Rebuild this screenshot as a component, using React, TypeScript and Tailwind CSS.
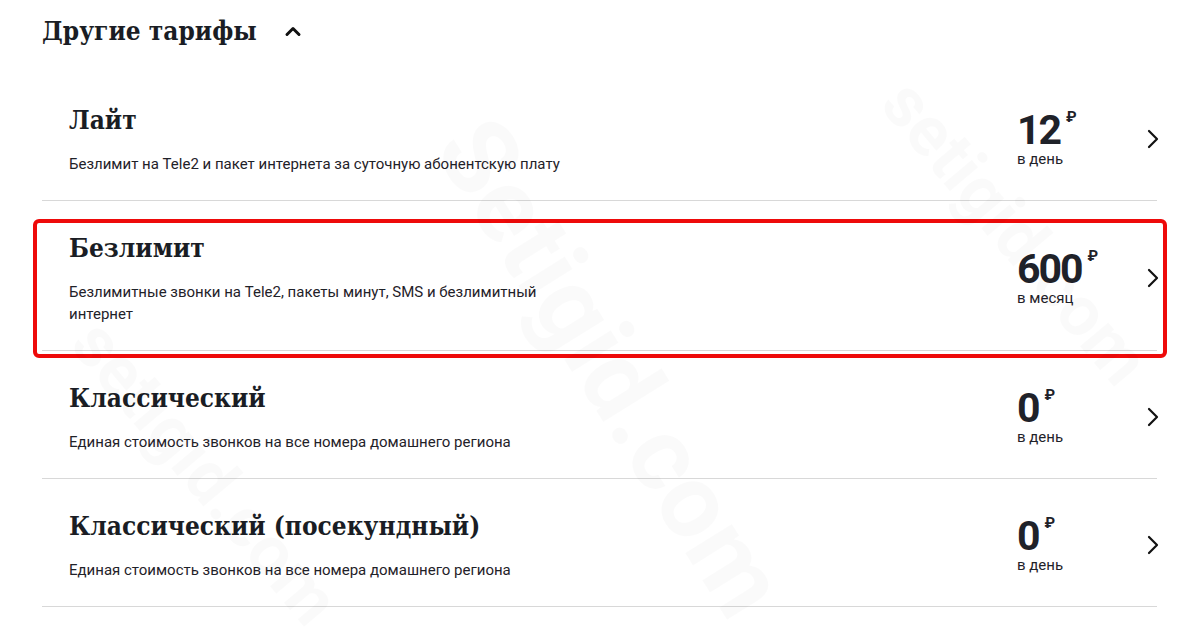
import React from 'react'

type Tariff = {
  title: string
  desc: string
  price: string
  period: string
  marked?: boolean
}

const tariffs: Tariff[] = [
  { title: 'Лайт', desc: 'Безлимит на Tele2 и пакет интернета за суточную абонентскую плату', price: '12', period: 'в день' },
  { title: 'Безлимит', desc: 'Безлимитные звонки на Tele2, пакеты минут, SMS и безлимитный интернет', price: '600', period: 'в месяц', marked: true },
  { title: 'Классический', desc: 'Единая стоимость звонков на все номера домашнего региона', price: '0', period: 'в день' },
  { title: 'Классический (посекундный)', desc: 'Единая стоимость звонков на все номера домашнего региона', price: '0', period: 'в день' },
]

const serif = { fontFamily: '"DejaVu Serif", serif' }

function ChevronRight() {
  return (
    <svg width="12" height="20" viewBox="0 0 12 20" fill="none">
      <path d="M2 2l8 8-8 8" stroke="#111" strokeWidth="2.2" strokeLinecap="round" strokeLinejoin="round" />
    </svg>
  )
}

function Row({ t }: { t: Tariff }) {
  return (
    <div className="relative flex items-center border-b border-[#d8d8d8] pl-[27px] pt-[30px] pb-[25px]">
      <div className="flex-1">
        <h3
          className="text-[26px] leading-[34px] font-bold text-[#1a1d24] font-stretch-condensed"
          style={serif}
        >
          {t.title}
        </h3>
        <p className="mt-[16px] max-w-[500px] text-[15px] leading-[22px] text-[#1f2229]">{t.desc}</p>
      </div>
      <div className="w-[130px] text-[#1f2229]">
        <div className="flex items-start h-[39px]">
          <span className="block text-[41px] leading-[39px] font-bold tracking-[-2px]">{t.price}</span>
          <span className="block ml-[6px] mt-[-1px] text-[15px] leading-[15px] font-bold">₽</span>
        </div>
        <div className="text-[15px] leading-[18px]">{t.period}</div>
      </div>
      <div className="w-[12px] mr-[-2px] flex items-center">
        <ChevronRight />
      </div>
      {t.marked && (
        <div className="pointer-events-none absolute top-[18px] bottom-[-8px] left-[-9px] right-[-10px] rounded-[6px] border-[4px] border-[#ee0a0a]" />
      )}
    </div>
  )
}

export default function App() {
  return (
    <div
      className="relative w-[1199px] h-[627px] overflow-hidden bg-white"
      style={{ fontFamily: 'Roboto, "Open Sans", sans-serif' }}
    >
      <div className="px-[42px]">
        <div className="flex items-center h-[64px] pb-[2px]">
          <h2
            className="text-[26px] font-bold text-[#1a1d24] font-stretch-condensed"
            style={serif}
          >
            Другие тарифы
          </h2>
          <svg className="ml-[27px]" width="18" height="12" viewBox="0 0 18 12" fill="none">
            <path d="M3 9.5l6-6 6 6" stroke="#111" strokeWidth="3" strokeLinecap="round" strokeLinejoin="round" />
          </svg>
        </div>
        <div className="mt-[9px] w-[1115px]">
          {tariffs.map((t) => (
            <Row key={t.title} t={t} />
          ))}
        </div>
      </div>
      {/* watermark */}
      <div className="pointer-events-none absolute left-[330px] top-[290px] rotate-[58deg] text-[104px] font-bold text-black/[0.02] whitespace-nowrap">
        Setigid.com
      </div>
      <div className="pointer-events-none absolute left-[830px] top-[180px] rotate-[50deg] text-[70px] font-bold text-black/[0.018] whitespace-nowrap">
        setigid.com
      </div>
      <div className="pointer-events-none absolute left-[20px] top-[420px] rotate-[50deg] text-[70px] font-bold text-black/[0.018] whitespace-nowrap">
        setigid.com
      </div>
    </div>
  )
}
